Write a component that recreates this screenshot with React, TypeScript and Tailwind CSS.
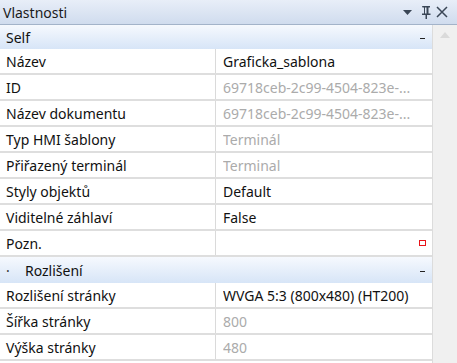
import React from 'react';

type Row = { label: string; value: string; muted?: boolean; note?: boolean };

const selfRows: Row[] = [
  { label: 'Název', value: 'Graficka_sablona' },
  { label: 'ID', value: '69718ceb-2c99-4504-823e-...', muted: true },
  { label: 'Název dokumentu', value: '69718ceb-2c99-4504-823e-...', muted: true },
  { label: 'Typ HMI šablony', value: 'Terminál', muted: true },
  { label: 'Přiřazený terminál', value: 'Terminal', muted: true },
  { label: 'Styly objektů', value: 'Default' },
  { label: 'Viditelné záhlaví', value: 'False' },
  { label: 'Pozn.', value: '', note: true },
];

const resRows: Row[] = [
  { label: 'Rozlišení stránky', value: 'WVGA 5:3 (800x480) (HT200)' },
  { label: 'Šířka stránky', value: '800', muted: true },
  { label: 'Výška stránky', value: '480', muted: true },
];

const SectionHeader = ({ title, dot, h }: { title: string; dot?: boolean; h: string }) => (
  <div className={`flex items-center ${h} bg-gradient-to-b from-[#f6f9fe] to-[#d7e5f7] pl-[6px] pr-[7px] pt-[2px]`}>
    {dot && <span className="w-[19px] text-[#333]">·</span>}
    <span className="flex-1 text-[#111]">{title}</span>
    <span className="h-[1px] w-[5px] bg-[#222]" />
  </div>
);

const PropRow = ({ row }: { row: Row }) => (
  <div className="flex h-[26px] border-b-2 border-[#dedede]">
    <div className="flex w-[216px] items-center border-r border-[#dadada] pl-[6px] pt-[2px] text-[#111]">
      {row.label}
    </div>
    <div className={`flex min-w-0 flex-1 items-center pl-[7px] pr-[6px] pt-[2px] ${row.muted ? 'text-[#ababab]' : 'text-[#111]'}`}>
      <span className="flex-1 overflow-hidden whitespace-nowrap">{row.value}</span>
      {row.note && <span className="mb-[3px] h-[6px] w-[7px] border-[1.5px] border-[#e8141a] bg-white" />}
    </div>
  </div>
);

export default function App() {
  return (
    <div
      className="flex h-[363px] w-[457px] flex-col overflow-hidden bg-white text-[14px] leading-[20px]"
      style={{ fontFamily: '"Noto Sans", "Open Sans", sans-serif' }}
    >
      <div className="flex h-[25px] shrink-0 items-center border-b border-[#a3b3c9] bg-gradient-to-b from-[#e8eef8] to-[#d0dcee] pl-[3px] pr-[5px]">
        <span className="flex-1 pt-[1px] text-[#1a1a1a]">Vlastnosti</span>
        <svg width="52" height="14" viewBox="0 0 52 14" className="text-[#3a4656]">
          <path d="M3 5h9l-4.5 5z" fill="currentColor" />
          <path d="M22 1h8v1.5h-1.5v6h2v1.5h-3.5v4h-1.5v-4h-3.5v-1.5h2v-6h-1.5z M25 2.5h1.5v6h-1.5z" fill="currentColor" fillRule="evenodd" />
          <path d="M37 2l10 10M47 2l-10 10" stroke="currentColor" strokeWidth="1.5" fill="none" />
        </svg>
      </div>
      <div className="flex flex-1">
        <div className="w-[433px] border-r border-[#dcdcdc]">
          <SectionHeader title="Self" h="h-[24px]" />
          {selfRows.map((r) => (
            <PropRow key={r.label} row={r} />
          ))}
          <SectionHeader title="Rozlišení" dot h="h-[26px]" />
          {resRows.map((r) => (
            <PropRow key={r.label} row={r} />
          ))}
        </div>
        <div className="flex flex-1 justify-center bg-[#f0f0f0] pt-[7px]">
          <svg width="10" height="6" viewBox="0 0 10 6">
            <path d="M0 6L5 0L10 6z" fill="#dadada" />
          </svg>
        </div>
      </div>
    </div>
  );
}
